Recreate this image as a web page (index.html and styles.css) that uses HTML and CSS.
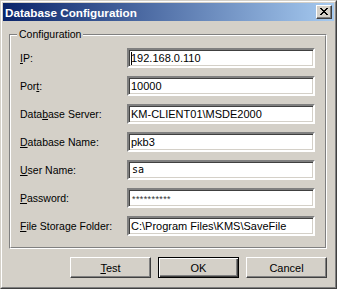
FILE: index.html
```html
<!DOCTYPE html>
<html>
<head>
<meta charset="utf-8">
<link rel="stylesheet" href="styles.css">
</head>
<body>
<div class="window">
  <div class="frame">
    <div class="titlebar">
      <span class="title">Database Configuration</span>
      <div class="close">
        <svg width="8" height="7" viewBox="0 0 8 7" shape-rendering="crispEdges"><path d="M0 0h2v1h1v1h2V1h1V0h2v1H7v1H6v1H5v1h1v1h1v1h1v1H6V6H5V5H3v1H2v1H0V6h1V5h1V4h1V3H2V2H1V1H0z" fill="#000"/></svg>
      </div>
    </div>
    <div class="body">
      <div class="group">
        <span class="legend">Configuration</span>
        <div class="group-inner">
          <span class="label"><u>I</u>P:</span>
          <div class="edit"><span class="caret"></span>192.168.0.110</div>
          <span class="label">Por<u>t</u>:</span>
          <div class="edit">10000</div>
          <span class="label">Data<u>b</u>ase Server:</span>
          <div class="edit">KM-CLIENT01\MSDE2000</div>
          <span class="label"><u>D</u>atabase Name:</span>
          <div class="edit">pkb3</div>
          <span class="label"><u>U</u>ser Name:</span>
          <div class="edit edit-mono">sa</div>
          <span class="label"><u>P</u>assword:</span>
          <div class="edit edit-pass">**********</div>
          <span class="label"><u>F</u>ile Storage Folder:</span>
          <div class="edit">C:\Program Files\KMS\SaveFile</div>
        </div>
      </div>
      <div class="buttons">
        <div class="btn"><span class="btn-face"><u>T</u>est</span></div>
        <div class="btn btn-default"><span class="btn-face">OK</span></div>
        <div class="btn"><span class="btn-face">Cancel</span></div>
      </div>
    </div>
  </div>
</div>
</body>
</html>
```

FILE: styles.css
```css
* { box-sizing: border-box; }
html, body { margin: 0; padding: 0; background: #D4D0C8; }
body { font-family: "Liberation Sans", Arial, sans-serif; }

.window {
  width: 337px;
  height: 289px;
  background: #D4D0C8;
  border-style: solid;
  border-width: 1px;
  border-color: #D4D0C8 #404040 #404040 #D4D0C8;
}
.frame {
  height: 100%;
  border-style: solid;
  border-width: 1px;
  border-color: #FFFFFF #808080 #808080 #FFFFFF;
  padding: 1px;
  display: flex;
  flex-direction: column;
}

.titlebar {
  height: 18px;
  background: linear-gradient(to right, #0A246A, #A6CAF0);
  display: flex;
  align-items: center;
  justify-content: space-between;
  padding: 0 2px 0 2px;
}
.title {
  color: #FFFFFF;
  font-weight: bold;
  font-size: 11.7px;
  padding-top: 1px;
}
.close {
  width: 16px;
  height: 14px;
  background: #D4D0C8;
  border-style: solid;
  border-width: 1px;
  border-color: #FFFFFF #404040 #404040 #FFFFFF;
  box-shadow: inset -1px -1px 0 #808080;
  display: flex;
  align-items: center;
  justify-content: center;
  padding: 0 1px 1px 0;
}
.close svg { display: block; }

.body {
  flex: 1;
  display: flex;
  flex-direction: column;
  padding: 13px 7px 0 6px;
}

.group {
  position: relative;
  border-style: solid;
  border-width: 1px;
  border-color: #808080 #FFFFFF #FFFFFF #808080;
}
.group-inner {
  border-style: solid;
  border-width: 1px;
  border-color: #FFFFFF #808080 #808080 #FFFFFF;
  display: grid;
  grid-template-columns: 1fr 188px;
  row-gap: 8px;
  align-items: center;
  padding: 12px 10px 11px 9px;
}
.legend {
  position: absolute;
  left: 7px;
  top: -7px;
  padding: 0 2px;
  background: #D4D0C8;
  font-size: 10.5px;
  color: #000;
  line-height: 13px;
}

.label {
  font-size: 10.5px;
  color: #000;
}
.label u { text-decoration-thickness: 1px; text-underline-offset: 1px; }

.edit {
  height: 20px;
  background: #FFFFFF;
  border-style: solid;
  border-width: 2px;
  border-color: #808080 #FFFFFF #FFFFFF #808080;
  box-shadow: inset 1px 1px 0 #404040, inset -1px -1px 0 #D4D0C8;
  font-size: 11px;
  line-height: 16px;
  padding-left: 2px;
  color: #000;
  white-space: nowrap;
  display: flex;
  align-items: center;
}
.caret {
  display: inline-block;
  width: 1px;
  height: 13px;
  background: #000;
  margin-right: -1px;
}
.edit-mono {
  font-family: "DejaVu Sans Mono", monospace;
  font-size: 10px;
  padding-left: 3px;
}
.edit-pass {
  font-size: 9px;
  padding-left: 3px;
  align-items: flex-start;
  padding-top: 1px;
  letter-spacing: 0.4px;
  color: #333;
}

.buttons {
  display: flex;
  justify-content: flex-end;
  gap: 7px;
  padding: 8px 0 0 0;
}
.btn {
  width: 81px;
  height: 21px;
  background: #D4D0C8;
  border-style: solid;
  border-width: 1px;
  border-color: #FFFFFF #404040 #404040 #FFFFFF;
  box-shadow: inset -1px -1px 0 #808080;
  display: flex;
  align-items: center;
  justify-content: center;
  font-size: 11px;
  color: #000;
}
.btn-default {
  border-color: #000;
  box-shadow: inset 1px 1px 0 #FFFFFF, inset -1px -1px 0 #404040, inset -2px -2px 0 #808080;
}
.btn-face u { text-underline-offset: 1px; }
```
